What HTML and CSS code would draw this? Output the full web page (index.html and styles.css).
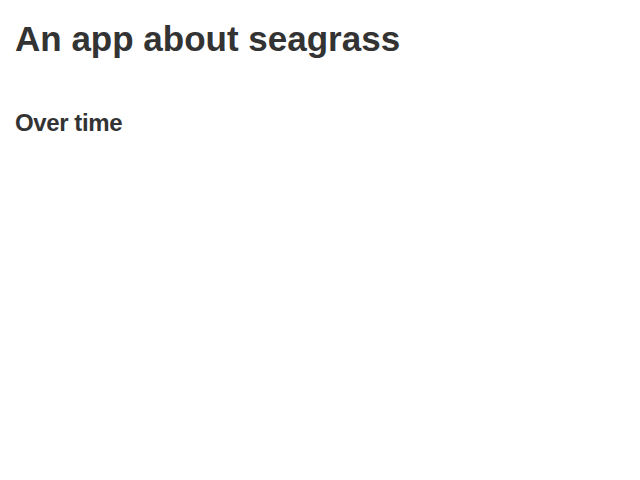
FILE: index.html
```html
<!DOCTYPE html>
<html>
<head>
<meta charset="utf-8">
<link rel="stylesheet" href="styles.css">
</head>
<body>
<div class="container">
  <h1 class="title">An app about seagrass</h1>
  <div class="section">
    <h3 class="subtitle">Over time</h3>
  </div>
</div>
</body>
</html>
```
FILE: styles.css
```css
html, body {
  margin: 0;
  padding: 0;
  background: #fff;
  color: #333;
  font-family: "Liberation Sans", Arial, sans-serif;
}
.container {
  padding: 0 15px;
}
.title {
  font-size: 35px;
  font-weight: 700;
  line-height: 1.1;
  margin: 20px 0 10px;
}
.section {
  padding-top: 41px;
}
.subtitle {
  font-size: 24px;
  font-weight: 700;
  line-height: 1.1;
  margin: 0;
  letter-spacing: -0.4px;
}
```
